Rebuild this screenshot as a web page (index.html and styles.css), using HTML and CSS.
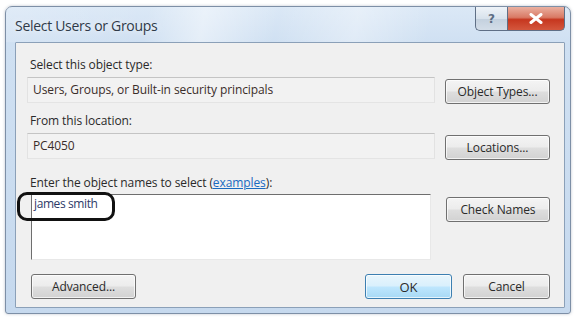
FILE: index.html
```html
<!DOCTYPE html>
<html>
<head>
<meta charset="utf-8">
<link rel="stylesheet" href="styles.css">
</head>
<body>
<div class="window">
  <div class="titlebar">
    <span class="title">Select Users or Groups</span>
    <div class="caption-buttons">
      <div class="cap help">?</div>
      <div class="cap close">
        <svg width="14" height="11" viewBox="0 0 14 11"><path d="M2 1.5 L12 9.5 M12 1.5 L2 9.5" stroke="#ffffff" stroke-width="3" stroke-linecap="round"/></svg>
      </div>
    </div>
  </div>
  <div class="client">
    <div class="label l1">Select this object type:</div>
    <div class="row r1">
      <div class="field">Users, Groups, or Built-in security principals</div>
      <div class="btn btn-side">Object Types...</div>
    </div>
    <div class="label l2">From this location:</div>
    <div class="row">
      <div class="field">PC4050</div>
      <div class="btn btn-side">Locations...</div>
    </div>
    <div class="label l3">Enter the object names to select (<span class="link">examples</span>):</div>
    <div class="row">
      <div class="textarea">james smith</div>
      <div class="btn btn-side btn-check">Check Names</div>
    </div>
    <div class="bottom-row">
      <div class="btn btn-adv">Advanced...</div>
      <div class="spacer"></div>
      <div class="btn btn-ok">OK</div>
      <div class="btn btn-cancel">Cancel</div>
    </div>
  </div>
</div>
<div class="annotation"></div>
</body>
</html>
```

FILE: styles.css
```css
html, body {
  margin: 0;
  padding: 0;
  background: #ffffff;
}
body {
  width: 576px;
  height: 321px;
  position: relative;
  overflow: hidden;
  font-family: "Open Sans", "Noto Sans", sans-serif;
  font-size: 12px;
  letter-spacing: -0.1px;
  color: #2a2a2a;
}
.window {
  position: relative;
  margin: 6px 0 0 5px;
  width: 564px;
  height: 306px;
  border: 1px solid #7d8fa6;
  border-radius: 7px 7px 3px 3px;
  background: linear-gradient(180deg, #dbe8f6 0%, #cfe0f2 12%, #c6d9ee 100%);
  box-shadow: 0 0 3px rgba(60, 80, 110, 0.35);
}
.titlebar {
  height: 35px;
  display: flex;
  align-items: flex-start;
  background: linear-gradient(100deg, rgba(255,255,255,0.15) 0%, rgba(255,255,255,0.0) 25%, rgba(255,255,255,0.45) 35%, rgba(255,255,255,0.0) 48%, rgba(255,255,255,0.35) 62%, rgba(255,255,255,0) 75%);
}
.title {
  margin: 9px 0 0 9px;
  font-size: 14px;
  letter-spacing: -0.3px;
  color: #2f3a48;
  text-shadow: 0 0 6px rgba(255,255,255,0.9);
}
.caption-buttons {
  margin-left: auto;
  margin-right: 5px;
  display: flex;
  height: 24px;
}
.cap {
  height: 23px;
  border: 1px solid #5f6f86;
  border-top: none;
  display: flex;
  align-items: center;
  justify-content: center;
}
.help {
  width: 31px;
  border-radius: 0 0 0 5px;
  border-right: none;
  background: linear-gradient(180deg, #eef3f8 0%, #d8e2ec 50%, #c3d0de 51%, #d3dde8 100%);
  color: #5d6d83;
  font-family: "DejaVu Sans", sans-serif;
  font-weight: bold;
  font-size: 12px;
}
.close {
  width: 56px;
  border-radius: 0 0 5px 0;
  background: linear-gradient(180deg, #eab0a0 0%, #d97a65 45%, #c6371f 55%, #d4573d 100%);
}
.client {
  margin: 0 5px 0 9px;
  height: 266px;
  border: 1px solid #8ba0b8;
  border-radius: 1px;
  background: #f0f0f0;
  padding: 14px 14px 0 11px;
  box-sizing: border-box;
  display: flex;
  flex-direction: column;
}
.label {
  height: 16px;
  line-height: 16px;
  margin-left: 3px;
  white-space: nowrap;
}
.l1 { margin-top: 0; }
.l2 { margin-top: 9px; }
.l3 { margin-top: 15px; }
.row {
  display: flex;
  align-items: flex-start;
  margin-top: 4px;
}
.r1 { margin-top: 4px; }
.field {
  width: 408px;
  height: 26px;
  box-sizing: border-box;
  border-top: 1px solid #c4c4c4;
  border-bottom: 1px solid #e4e4e4;
  border-left: 1px solid #e2e2e2;
  border-right: 1px solid #e2e2e2;
  background: #f2f2f2;
  padding-left: 5px;
  line-height: 24px;
  color: #3a2d2a;
  white-space: nowrap;
}
.textarea {
  width: 403px;
  height: 66px;
  margin-left: 4px;
  margin-right: 5px;
  margin-top: -1px;
  box-sizing: border-box;
  background: #ffffff;
  border-top: 1px solid #6e6e6e;
  border-left: 1px solid #6e6e6e;
  border-right: 1px solid #e8e8e8;
  border-bottom: 1px solid #e8e8e8;
  padding: 1px 0 0 2px;
  color: #2d3a68;
  letter-spacing: -0.4px;
  line-height: 16px;
}
.btn {
  height: 25px;
  box-sizing: border-box;
  border: 1px solid #707070;
  border-radius: 3px;
  background: linear-gradient(180deg, #f4f4f4 0%, #ececec 48%, #dedede 52%, #d2d2d2 100%);
  box-shadow: inset 0 0 0 1px rgba(255,255,255,0.7);
  display: flex;
  align-items: center;
  justify-content: center;
  color: #2a2a2a;
  white-space: nowrap;
}
.btn-side {
  width: 105px;
  margin-left: 10px;
  margin-top: 2px;
}
.btn-check {
  margin-top: 2px;
}
.bottom-row {
  display: flex;
  margin-top: 14px;
}
.btn-adv {
  width: 105px;
  margin-left: 4px;
}
.spacer { flex: 1; }
.btn-ok {
  width: 87px;
  border-color: #3c7fb1;
  background: linear-gradient(180deg, #e8f5fc 0%, #d9f0fc 48%, #bee6fd 52%, #a7d9f5 100%);
  font-size: 13px;
}
.btn-cancel {
  width: 87px;
  margin-left: 11px;
}
.link {
  color: #1a6ac0;
  text-decoration: underline;
}
.annotation {
  position: absolute;
  left: 17px;
  top: 192px;
  width: 92px;
  height: 23px;
  border: 3px solid #111111;
  border-radius: 10px;
}
```
